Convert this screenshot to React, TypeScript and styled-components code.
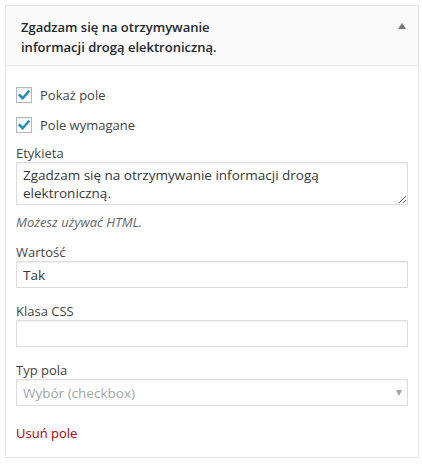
import React from "react";
import styled, { createGlobalStyle } from "styled-components";

const GlobalStyle = createGlobalStyle`
  html, body {
    margin: 0;
    padding: 0;
    background: #fff;
  }
  body {
    font-family: "Open Sans", "Noto Sans", sans-serif;
    color: #444;
  }
  * {
    box-sizing: border-box;
  }
`;

const Page = styled.div`
  padding: 5px;
`;

const Widget = styled.div`
  width: 414px;
  border: 1px solid #e5e5e5;
  background: #fff;
`;

const WidgetTop = styled.div`
  display: flex;
  justify-content: space-between;
  align-items: flex-start;
  background: #fafafa;
  border-bottom: 1px solid #e5e5e5;
  padding: 11px 12px 8px 15px;
`;

const WidgetTitle = styled.h3`
  margin: 0;
  max-width: 230px;
  font-size: 13px;
  font-weight: 600;
  line-height: 20px;
  color: #23282d;
`;

const ToggleArrow = styled.span`
  margin-top: 6px;
  width: 0;
  height: 0;
  border-left: 4px solid transparent;
  border-right: 4px solid transparent;
  border-bottom: 6px solid #72777c;
`;

const WidgetInside = styled.div`
  padding: 21px 9px 15px 10px;
  display: flex;
  flex-direction: column;
`;

const CheckRow = styled.label<{ $gap: number }>`
  display: flex;
  align-items: center;
  height: 16px;
  margin-bottom: ${(p) => p.$gap}px;
  font-size: 13px;
  color: #444;
`;

const CheckBox = styled.span`
  display: inline-flex;
  align-items: center;
  justify-content: center;
  width: 16px;
  height: 16px;
  border: 1px solid #b4b9be;
  background: #fff;
  box-shadow: inset 0 1px 2px rgba(0, 0, 0, 0.1);
  margin-right: 8px;
`;

const FieldLabel = styled.div`
  font-size: 13px;
  line-height: 17px;
  color: #444;
`;

const TextArea = styled.textarea`
  display: block;
  width: 392px;
  height: 43px;
  margin: 0;
  padding: 3px 40px 2px 6px;
  border: 1px solid #ddd;
  box-shadow: inset 0 1px 2px rgba(0, 0, 0, 0.07);
  font-family: "Open Sans", "Noto Sans", sans-serif;
  font-size: 13.5px;
  line-height: 18px;
  color: #32373c;
  resize: vertical;
  overflow: hidden;
  outline: none;
`;

const Hint = styled.p`
  margin: 8px 0 13px;
  font-size: 13px;
  line-height: 18px;
  font-style: italic;
  color: #666;
`;

const Field = styled.div<{ $gap: number }>`
  margin-bottom: ${(p) => p.$gap}px;
`;

const TextInput = styled.input`
  display: block;
  width: 392px;
  height: 27px;
  margin: 0;
  padding: 0 6px;
  border: 1px solid #ddd;
  box-shadow: inset 0 1px 2px rgba(0, 0, 0, 0.07);
  font-family: "Open Sans", "Noto Sans", sans-serif;
  font-size: 13.5px;
  color: #32373c;
  outline: none;
`;

const SelectWrap = styled.div`
  position: relative;
  width: 392px;
`;

const Select = styled.select`
  display: block;
  width: 100%;
  height: 27px;
  margin: 0;
  padding: 0 24px 0 6px;
  border: 1px solid #ddd;
  border-radius: 0;
  background: #fff;
  box-shadow: inset 0 1px 2px rgba(0, 0, 0, 0.04);
  appearance: none;
  -webkit-appearance: none;
  font-family: "Open Sans", "Noto Sans", sans-serif;
  font-size: 13.5px;
  color: #a0a5aa;
  outline: none;
`;

const SelectArrow = styled.span`
  position: absolute;
  right: 6px;
  top: 11px;
  width: 0;
  height: 0;
  border-left: 3.5px solid transparent;
  border-right: 3.5px solid transparent;
  border-top: 6px solid #a0a5aa;
  pointer-events: none;
`;

const DeleteLink = styled.a`
  display: block;
  font-size: 13px;
  line-height: 18px;
  color: #a00;
  text-decoration: none;
  cursor: pointer;
`;

const CheckMark = () => (
  <svg width="14" height="14" viewBox="0 0 14 14">
    <path
      d="M2.6 7.2 L5.6 10.2 L11.6 3.6"
      fill="none"
      stroke="#1e8cbe"
      strokeWidth="2.4"
      strokeLinecap="square"
    />
  </svg>
);

const Check: React.FC<{ label: string; gap: number }> = ({ label, gap }) => (
  <CheckRow $gap={gap}>
    <CheckBox>
      <CheckMark />
    </CheckBox>
    {label}
  </CheckRow>
);

export default function App() {
  return (
    <Page>
      <GlobalStyle />
      <Widget>
        <WidgetTop>
          <WidgetTitle>Zgadzam się na otrzymywanie informacji drogą elektroniczną.</WidgetTitle>
          <ToggleArrow />
        </WidgetTop>
        <WidgetInside>
          <Check label="Pokaż pole" gap={14} />
          <Check label="Pole wymagane" gap={12} />
          <FieldLabel>Etykieta</FieldLabel>
          <TextArea
            rows={2}
            defaultValue="Zgadzam się na otrzymywanie informacji drogą elektroniczną."
          />
          <Hint>Możesz używać HTML.</Hint>
          <Field $gap={15}>
            <FieldLabel>Wartość</FieldLabel>
            <TextInput defaultValue="Tak" />
          </Field>
          <Field $gap={15}>
            <FieldLabel>Klasa CSS</FieldLabel>
            <TextInput defaultValue="" />
          </Field>
          <Field $gap={18}>
            <FieldLabel>Typ pola</FieldLabel>
            <SelectWrap>
              <Select defaultValue="checkbox">
                <option value="checkbox">Wybór (checkbox)</option>
              </Select>
              <SelectArrow />
            </SelectWrap>
          </Field>
          <DeleteLink>Usuń pole</DeleteLink>
        </WidgetInside>
      </Widget>
    </Page>
  );
}
